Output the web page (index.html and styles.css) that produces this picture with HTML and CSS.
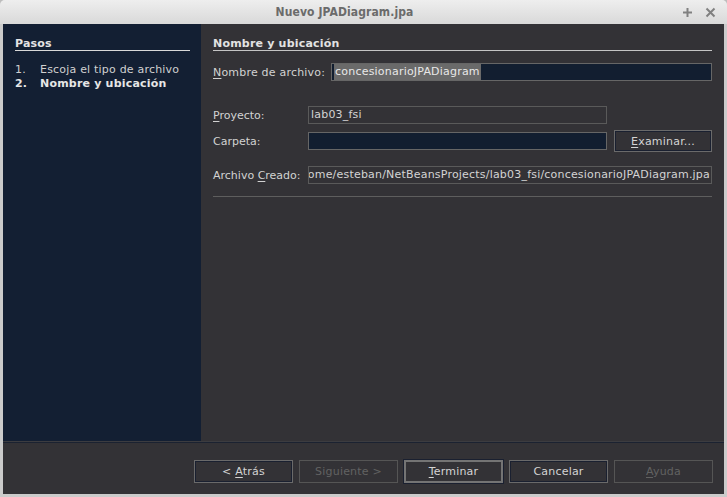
FILE: index.html
```html
<!DOCTYPE html>
<html>
<head>
<meta charset="utf-8">
<link rel="stylesheet" href="styles.css">
</head>
<body>
<div class="window">
  <div class="titlebar">
    <span class="title">Nuevo JPADiagram.jpa</span>
    <div class="tb-buttons">
      <svg width="11" height="11" viewBox="0 0 11 11"><path d="M5.5 1v9M1 5.5h9" stroke="#808080" stroke-width="2"/></svg>
      <svg width="11" height="11" viewBox="0 0 11 11"><path d="M1.5 1.5l8 8M9.5 1.5l-8 8" stroke="#808080" stroke-width="2"/></svg>
    </div>
  </div>
  <div class="frame">
    <div class="main">
      <div class="steps">
        <div class="steps-head">Pasos</div>
        <ol class="step-list">
          <li><span class="num">1.</span>Escoja el tipo de archivo</li>
          <li class="current"><span class="num">2.</span>Nombre y ubicación</li>
        </ol>
      </div>
      <div class="content">
        <div class="content-head">Nombre y ubicación</div>
        <div class="name-row">
          <span class="label"><u>N</u>ombre de archivo:</span>
          <div class="field dark"><span class="sel">concesionarioJPADiagram</span></div>
        </div>
        <div class="row row-project">
          <span class="label"><u>P</u>royecto:</span>
          <div class="field">lab03_fsi</div>
        </div>
        <div class="row row-folder">
          <span class="label">Carpeta:</span>
          <div class="field dark"></div>
          <div class="btn browse"><span><u>E</u>xaminar...</span></div>
        </div>
        <div class="row row-created">
          <span class="label">Archivo <u>C</u>reado:</span>
          <div class="field path"><span>/home/esteban/NetBeansProjects/lab03_fsi/concesionarioJPADiagram.jpa</span></div>
        </div>
        <div class="rule"></div>
      </div>
    </div>
    <div class="bottom">
      <div class="btn"><span>&lt; <u>A</u>trás</span></div>
      <div class="btn disabled"><span>Siguiente &gt;</span></div>
      <div class="btn focus"><span><u>T</u>erminar</span></div>
      <div class="btn"><span>Cancelar</span></div>
      <div class="btn disabled"><span><u>A</u>yuda</span></div>
    </div>
  </div>
</div>
</body>
</html>
```

FILE: styles.css
```css
* { box-sizing: border-box; }
html, body { margin: 0; padding: 0; background: #bdbdbd; }
body { font-family: "DejaVu Sans", sans-serif; font-size: 11px; color: #d2d2d2; letter-spacing: 0.2px; }
.window {
  width: 727px; height: 497px;
  background: #cbcbcb;
  border-radius: 5px 5px 0 0;
  display: flex; flex-direction: column;
  overflow: hidden;
}
.titlebar {
  height: 24px; flex: none;
  background: linear-gradient(#eeeeee, #d9d9d9);
  position: relative;
  display: flex; align-items: center; justify-content: center;
}
.title {
  font-family: "DejaVu Sans Condensed", "DejaVu Sans", sans-serif;
  font-stretch: condensed;
  font-weight: bold; font-size: 12px; color: #6b6b6b;
  letter-spacing: 0.1px;
  margin-right: 38px;
}
.tb-buttons {
  position: absolute; right: 11px; top: 7px;
  display: flex; gap: 12px;
}
.frame {
  flex: 1; margin: 0 3px 3px 3px;
  background: #333236;
  display: flex; flex-direction: column;
}
.main { display: flex; height: 418px; flex: none; }
.steps {
  flex: none;
  width: 198px; background: #131f33;
  padding: 13px 11px 0 12px;
}
.steps-head {
  font-weight: bold; color: #e4e4e4;
  padding-bottom: 0;
  border-bottom: 1px solid #d8d8d8;
  line-height: 13px;
}
.step-list { list-style: none; margin: 12px 0 0 0; padding: 0; }
.step-list li { line-height: 14px; color: #d0d0d0; }
.step-list li.current { font-weight: bold; color: #e6e6e6; }
.num { display: inline-block; width: 25px; }
.content { flex: 1; min-width: 0; padding: 13px 12px 0 12px; }
.content-head {
  font-weight: bold; color: #e2e2e2;
  line-height: 13px; padding-bottom: 0;
  border-bottom: 1px solid #c4c4c4;
}
.label { white-space: nowrap; color: #d2d2d2; }
u { text-decoration: underline; text-underline-offset: 2px; }
.name-row {
  display: flex; align-items: center; gap: 6px;
  margin-top: 12px;
}
.field {
  height: 18px; border: 1px solid #5a5a5a;
  padding: 0 2px; line-height: 16px;
  white-space: nowrap; overflow: hidden;
  color: #d4d4d4;
}
.name-row .field { flex: 1; }
.field.dark { background: #121e30; border-color: #666; }
.sel { background: #6a6a6a; color: #e8e8e8; display: inline-block; line-height: 16px; padding: 0 1px; }
.row {
  display: grid;
  grid-template-columns: 88px 299px 98px;
  column-gap: 7px;
  align-items: center;
}
.row .label { letter-spacing: 0; }
.row-project { margin-top: 25px; height: 18px; }
.row-folder { margin-top: 6px; height: 22px; }
.row-created { margin-top: 14px; height: 18px; }
.field.path {
  grid-column: 2 / 4;
  display: flex; justify-content: flex-end;
  padding-right: 1px;
}
.field.path span { flex: none; }
.rule { border-top: 1px solid #5e5e5e; margin-top: 12px; }
.btn {
  height: 23px; border: 1px solid #6a6a6a;
  box-shadow: inset -1px -1px 0 #1a2030, inset 1px 1px 0 #1a2030;
  display: flex; align-items: center; justify-content: center;
  color: #d4d4d4; white-space: nowrap;
}
.btn.browse { height: 22px; }
.bottom {
  flex: 1;
  border-top: 1px solid #1b2231;
  box-shadow: 0 -1px 0 #3c3c40;
  display: flex; gap: 6px;
  padding: 17px 10px 0 191px;
}
.bottom .btn { width: 99px; }
.btn.disabled { color: #626262; border-color: #555; box-shadow: none; }
.btn.focus { border: 2px solid #747474; box-shadow: 0 0 0 1px #1a2030; }
```
